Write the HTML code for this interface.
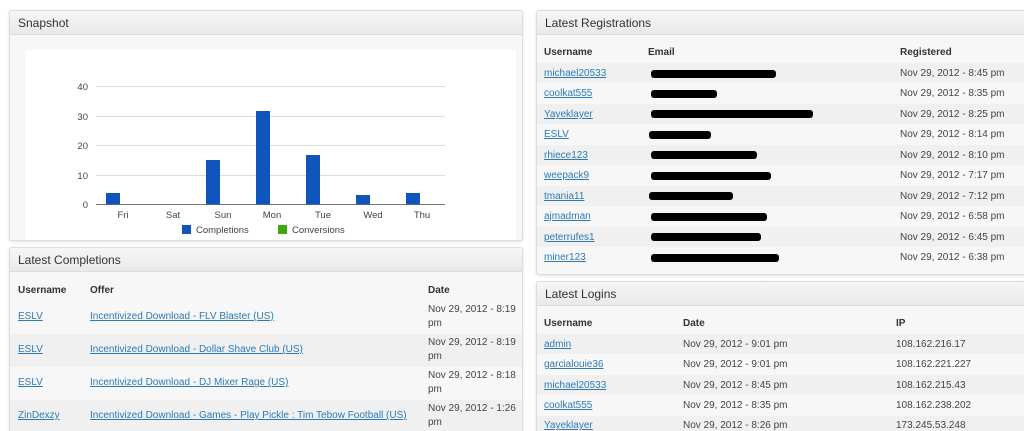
<!DOCTYPE html>
<html style="width:1024px;height:431px;overflow:hidden"><head><meta charset="utf-8"><style>
*{margin:0;padding:0;box-sizing:border-box}
body{width:1024px;height:431px;overflow:hidden;background:#fff;font-family:"Liberation Sans",Arial,sans-serif;font-size:10px;color:#444;position:relative}
.p{position:absolute;background:#f7f7f7;border:1px solid #ddd;border-radius:3px;box-shadow:0 1px 3px rgba(0,0,0,.12);overflow:hidden}
.h{height:24px;background:linear-gradient(#f6f6f6,#e9e9e9);border-bottom:1px solid #ddd;font-size:12px;color:#333;padding:5px 0 0 8px}
.a{position:absolute;white-space:nowrap}
.th{font-weight:bold;color:#333}
a{color:#2b7bb9;text-decoration:underline}
.st{position:absolute;left:0;right:0;background:#f0f0f0}
.bl{position:absolute;height:8px;background:#000;border-radius:3px}
</style></head><body>

<!-- Snapshot -->
<div class="p" style="left:9px;top:10px;width:514px;height:231px">
<div class="h">Snapshot</div>
<div style="position:absolute;left:16px;top:39px;width:490px;height:192px;background:#fff"></div>
<svg style="position:absolute;left:-9px;top:-10px" width="530" height="250" font-family="Liberation Sans,Arial,sans-serif" font-size="9.5" fill="#444">
<g stroke="#ddd" stroke-width="1">
<line x1="95" x2="444" y1="85.5" y2="85.5"/><line x1="95" x2="444" y1="115.5" y2="115.5"/><line x1="95" x2="444" y1="144.5" y2="144.5"/><line x1="95" x2="444" y1="174.5" y2="174.5"/></g>
<line x1="95" x2="444" y1="203.5" y2="203.5" stroke="#777"/>
<g text-anchor="end"><text x="87" y="89">40</text><text x="87" y="119">30</text><text x="87" y="148">20</text><text x="87" y="178">10</text><text x="87" y="207">0</text></g>
<g fill="#1055bb"><rect x="105" y="192" width="14" height="11.5"/><rect x="205" y="159" width="14" height="44.5"/><rect x="255" y="110" width="14" height="93.5"/><rect x="305" y="154" width="14" height="49.5"/><rect x="355" y="194" width="14" height="9.5"/><rect x="405" y="192" width="14" height="11.5"/></g>
<g text-anchor="middle"><text x="122" y="217">Fri</text><text x="172" y="217">Sat</text><text x="222" y="217">Sun</text><text x="271" y="217">Mon</text><text x="322" y="217">Tue</text><text x="372" y="217">Wed</text><text x="421" y="217">Thu</text></g>
<rect x="181" y="224" width="9" height="9" fill="#1055bb"/><text x="195" y="232">Completions</text>
<rect x="277" y="224" width="9" height="9" fill="#3aaa0a"/><text x="291" y="232">Conversions</text>
</svg>
</div>

<!-- Latest Completions -->
<div class="p" style="left:9px;top:247px;width:514px;height:200px">
<div class="h">Latest Completions</div>
<div class="st" style="top:86px;height:33px"></div>
<div class="st" style="top:152px;height:33px"></div>
<div class="a th" style="left:8px;top:37px">Username</div><div class="a th" style="left:80px;top:37px">Offer</div><div class="a th" style="left:418px;top:37px">Date</div>
<div class="a" style="left:8px;top:63px"><a>ESLV</a></div><div class="a" style="left:80px;top:63px"><a>Incentivized Download - FLV Blaster (US)</a></div><div class="a" style="left:418px;top:55px;line-height:14px">Nov 29, 2012 - 8:19<br>pm</div>
<div class="a" style="left:8px;top:96px"><a>ESLV</a></div><div class="a" style="left:80px;top:96px"><a>Incentivized Download - Dollar Shave Club (US)</a></div><div class="a" style="left:418px;top:88px;line-height:14px">Nov 29, 2012 - 8:19<br>pm</div>
<div class="a" style="left:8px;top:129px"><a>ESLV</a></div><div class="a" style="left:80px;top:129px"><a>Incentivized Download - DJ Mixer Rage (US)</a></div><div class="a" style="left:418px;top:121px;line-height:14px">Nov 29, 2012 - 8:18<br>pm</div>
<div class="a" style="left:8px;top:162px"><a>ZinDexzy</a></div><div class="a" style="left:80px;top:162px"><a>Incentivized Download - Games - Play Pickle : Tim Tebow Football (US)</a></div><div class="a" style="left:418px;top:154px;line-height:14px">Nov 29, 2012 - 1:26<br>pm</div>
</div>

<!-- Latest Registrations -->
<div class="p" style="left:536px;top:10px;width:500px;height:265px">
<div class="h">Latest Registrations</div>
<div class="st" style="top:52px;height:20px"></div><div class="st" style="top:93px;height:20px"></div><div class="st" style="top:134px;height:20px"></div><div class="st" style="top:175px;height:20px"></div><div class="st" style="top:216px;height:20px"></div>
<div class="a th" style="left:7px;top:36px">Username</div><div class="a th" style="left:111px;top:36px">Email</div><div class="a th" style="left:363px;top:36px">Registered</div>
<div class="a" style="left:7px;top:57px"><a>michael20533</a></div><div class="bl" style="left:114px;top:59px;width:125px"></div><div class="a" style="left:363px;top:57px">Nov 29, 2012 - 8:45 pm</div>
<div class="a" style="left:7px;top:77px"><a>coolkat555</a></div><div class="bl" style="left:114px;top:79px;width:66px"></div><div class="a" style="left:363px;top:77px">Nov 29, 2012 - 8:35 pm</div>
<div class="a" style="left:7px;top:98px"><a>Yayeklayer</a></div><div class="bl" style="left:114px;top:99px;width:162px"></div><div class="a" style="left:363px;top:98px">Nov 29, 2012 - 8:25 pm</div>
<div class="a" style="left:7px;top:118px"><a>ESLV</a></div><div class="bl" style="left:112px;top:120px;width:62px"></div><div class="a" style="left:363px;top:118px">Nov 29, 2012 - 8:14 pm</div>
<div class="a" style="left:7px;top:139px"><a>rhiece123</a></div><div class="bl" style="left:114px;top:140px;width:106px"></div><div class="a" style="left:363px;top:139px">Nov 29, 2012 - 8:10 pm</div>
<div class="a" style="left:7px;top:159px"><a>weepack9</a></div><div class="bl" style="left:114px;top:161px;width:120px"></div><div class="a" style="left:363px;top:159px">Nov 29, 2012 - 7:17 pm</div>
<div class="a" style="left:7px;top:180px"><a>tmania11</a></div><div class="bl" style="left:112px;top:181px;width:84px"></div><div class="a" style="left:363px;top:180px">Nov 29, 2012 - 7:12 pm</div>
<div class="a" style="left:7px;top:200px"><a>ajmadman</a></div><div class="bl" style="left:114px;top:202px;width:116px"></div><div class="a" style="left:363px;top:200px">Nov 29, 2012 - 6:58 pm</div>
<div class="a" style="left:7px;top:221px"><a>peterrufes1</a></div><div class="bl" style="left:114px;top:222px;width:110px"></div><div class="a" style="left:363px;top:221px">Nov 29, 2012 - 6:45 pm</div>
<div class="a" style="left:7px;top:241px"><a>miner123</a></div><div class="bl" style="left:114px;top:243px;width:128px"></div><div class="a" style="left:363px;top:241px">Nov 29, 2012 - 6:38 pm</div>
</div>

<!-- Latest Logins -->
<div class="p" style="left:536px;top:281px;width:500px;height:170px">
<div class="h">Latest Logins</div>
<div class="st" style="top:52px;height:20px"></div><div class="st" style="top:93px;height:20px"></div><div class="st" style="top:134px;height:20px"></div>
<div class="a th" style="left:7px;top:36px">Username</div><div class="a th" style="left:146px;top:36px">Date</div><div class="a th" style="left:359px;top:36px">IP</div>
<div class="a" style="left:7px;top:57px"><a>admin</a></div><div class="a" style="left:146px;top:57px">Nov 29, 2012 - 9:01 pm</div><div class="a" style="left:359px;top:57px">108.162.216.17</div>
<div class="a" style="left:7px;top:77px"><a>garcialouie36</a></div><div class="a" style="left:146px;top:77px">Nov 29, 2012 - 9:01 pm</div><div class="a" style="left:359px;top:77px">108.162.221.227</div>
<div class="a" style="left:7px;top:98px"><a>michael20533</a></div><div class="a" style="left:146px;top:98px">Nov 29, 2012 - 8:45 pm</div><div class="a" style="left:359px;top:98px">108.162.215.43</div>
<div class="a" style="left:7px;top:118px"><a>coolkat555</a></div><div class="a" style="left:146px;top:118px">Nov 29, 2012 - 8:35 pm</div><div class="a" style="left:359px;top:118px">108.162.238.202</div>
<div class="a" style="left:7px;top:138px"><a>Yayeklayer</a></div><div class="a" style="left:146px;top:138px">Nov 29, 2012 - 8:26 pm</div><div class="a" style="left:359px;top:138px">173.245.53.248</div>
</div>
</body></html>
